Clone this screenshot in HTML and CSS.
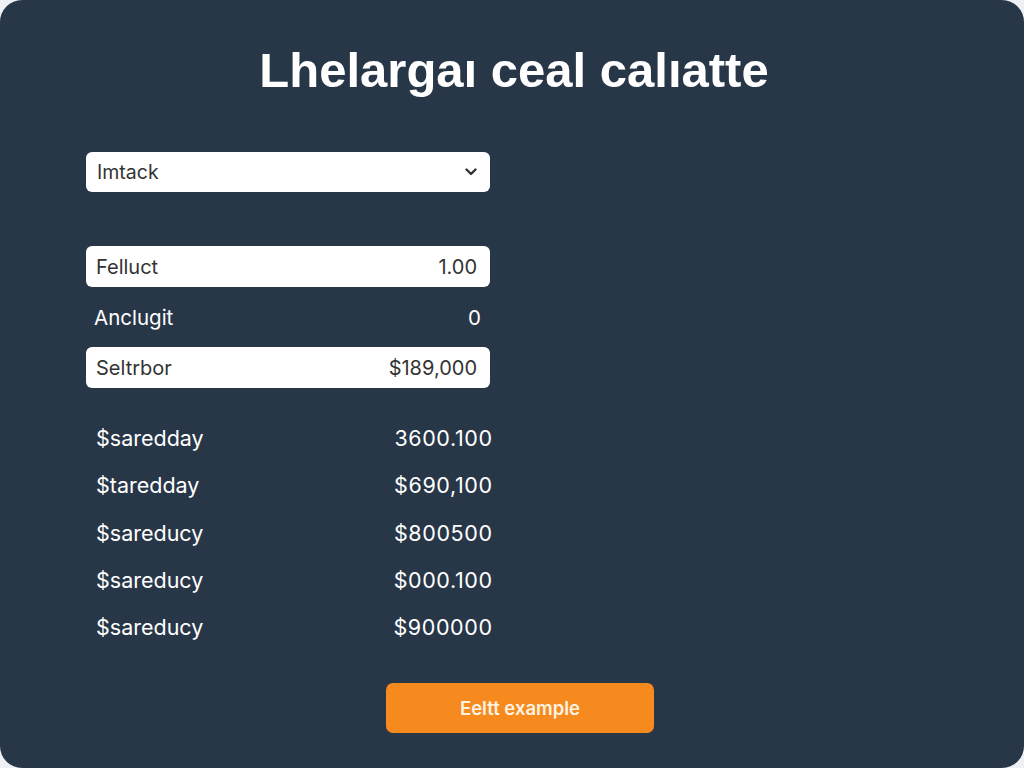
FILE: index.html
```html
<!DOCTYPE html>
<html lang="en">

<head>
    <meta charset="UTF-8">
    <meta name="viewport" content="width=device-width, initial-scale=1.0">
    <title>Calculator</title>
    <link rel="stylesheet" href="styles.css">
</head>

<body>
    <div class="card">
        <h1>Lhelargaı ceal calıatte</h1>

        <div class="form">
            <div class="select">
                <span>Imtack</span>
                <svg width="12" height="8" viewBox="0 0 12 8">
                    <path d="M1.5 1.5 L6 6 L10.5 1.5" fill="none" stroke="#333" stroke-width="2.4" stroke-linecap="round" stroke-linejoin="round"/>
                </svg>
            </div>

            <div class="fields">
                <div class="field boxed"><span>Felluct</span><span>1.00</span></div>
                <div class="field plain"><span>Anclugit</span><span>0</span></div>
                <div class="field boxed"><span>Seltrbor</span><span>$189,000</span></div>
            </div>

            <ul class="results">
                <li><span>$saredday</span><span class="amount">3600.100</span></li>
                <li><span>$taredday</span><span class="amount">$690,100</span></li>
                <li><span>$sareducy</span><span class="amount">$800500</span></li>
                <li><span>$sareducy</span><span class="amount">$000.100</span></li>
                <li><span>$sareducy</span><span class="amount">$900000</span></li>
            </ul>
        </div>

        <div class="actions">
            <button type="button">Eeltt example</button>
        </div>
    </div>
</body>

</html>
```

FILE: styles.css
```css
html, body {
    margin: 0;
    height: 100%;
    background: #eef0f3;
}

body {
    font-family: Inter, "Noto Sans", sans-serif;
}

.card {
    box-sizing: border-box;
    height: 768px;
    background-color: #283748;
    border-radius: 22px;
    padding: 42px 0 0 86px;
}

.card h1 {
    margin: 0 0 0 -86px;
    text-align: center;
    font-family: "Liberation Sans", Arial, sans-serif;
    font-size: 49px;
    font-weight: bold;
    color: #fff;
    line-height: 56px;
    padding-left: 4px;
}

.form {
    width: 404px;
    margin-top: 54px;
}

.select {
    display: flex;
    justify-content: space-between;
    align-items: center;
    height: 40px;
    padding: 0 13px 0 11px;
    background-color: #fff;
    border-radius: 6px;
    color: #333;
    font-size: 19.5px;
}

.fields {
    margin-top: 54px;
    display: flex;
    flex-direction: column;
    gap: 18px;
}

.field {
    display: flex;
    justify-content: space-between;
    align-items: center;
    font-size: 20px;
}

.field.boxed {
    height: 41px;
    padding: 0 13px 0 10px;
    background-color: #fff;
    border-radius: 6px;
    color: #333;
}

.field.plain {
    height: 24px;
    padding: 0 9px 0 8px;
    color: #fff;
    font-size: 20.5px;
}

.results {
    list-style: none;
    margin: 34px 0 0;
    padding: 0 0 0 10px;
    width: 396px;
}

.results li {
    display: flex;
    justify-content: space-between;
    height: 47.3px;
    line-height: 32px;
    color: #fff;
    font-size: 21.5px;
}

.results .amount {
    letter-spacing: 0.6px;
    margin-right: -0.6px;
}

.actions {
    display: flex;
    margin: 25px 0 0 300px;
}

.actions button {
    width: 268px;
    height: 50px;
    border: none;
    border-radius: 7px;
    background-color: #f68a1f;
    color: #fdf3e3;
    font-family: Inter, "Noto Sans", sans-serif;
    font-size: 18.5px;
    font-weight: 600;
    cursor: pointer;
}
```
